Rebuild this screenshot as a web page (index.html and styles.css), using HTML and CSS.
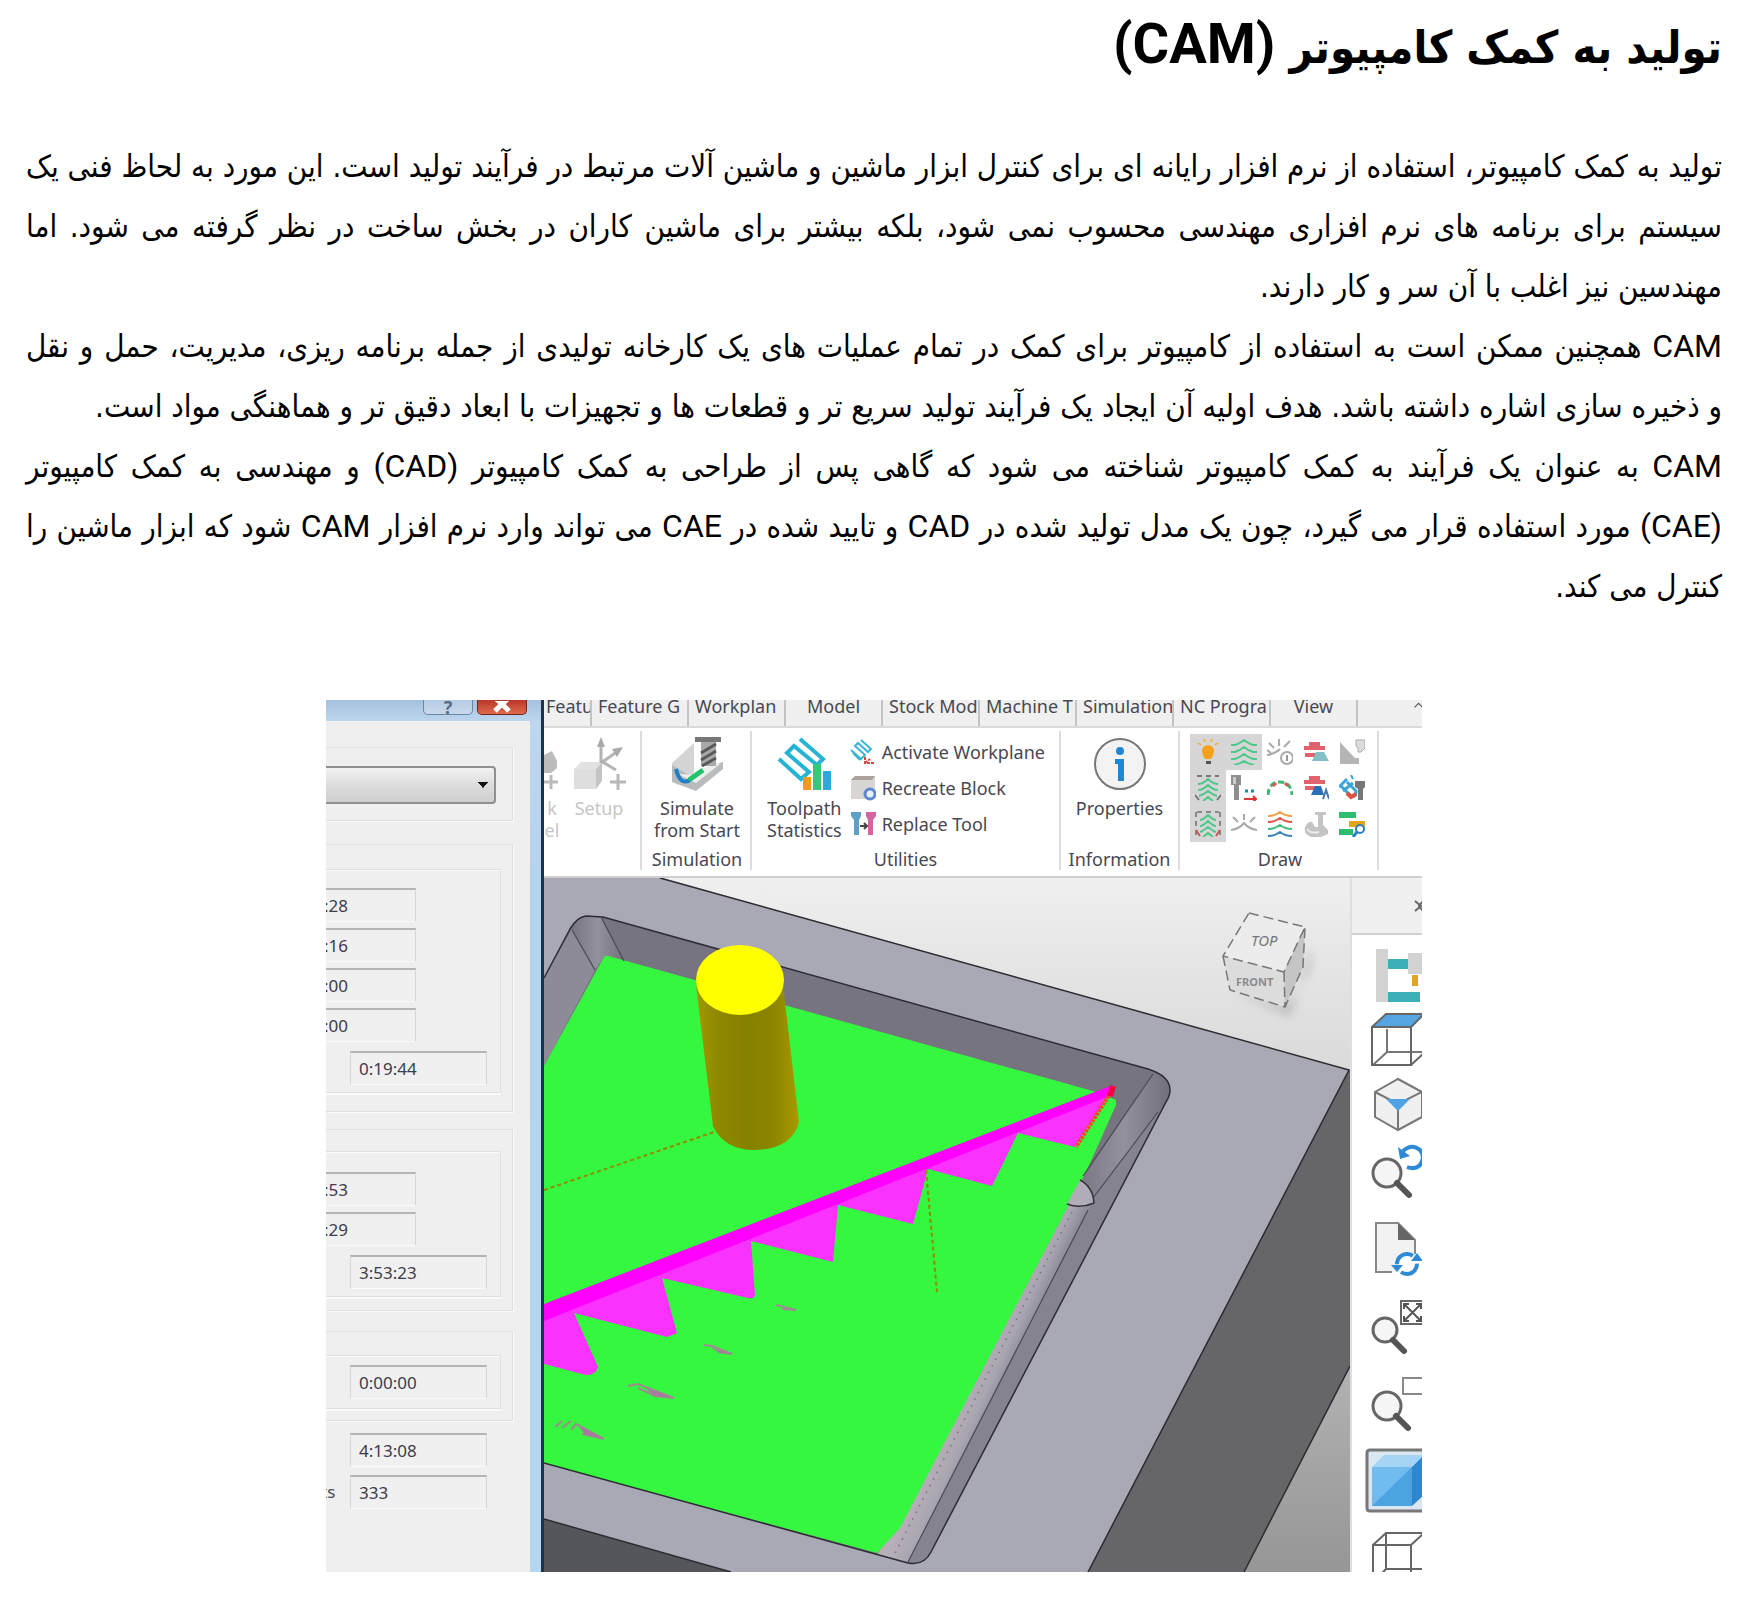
FILE: index.html
```html
<!DOCTYPE html>
<html lang="fa" dir="rtl">
<head>
<meta charset="utf-8">
<meta name="viewport" content="width=device-width, initial-scale=1">
<title>تولید به کمک کامپیوتر (CAM)</title>
<link rel="stylesheet" href="styles.css">
</head>
<body>
<article class="article">
<h1 class="title">تولید به کمک کامپیوتر <bdi class="latin">(CAM)</bdi></h1>
<p class="text">تولید به کمک کامپیوتر، استفاده از نرم افزار رایانه ای برای کنترل ابزار ماشین و ماشین آلات مرتبط در فرآیند تولید است. این مورد به لحاظ فنی یک سیستم برای برنامه های نرم افزاری مهندسی محسوب نمی شود، بلکه بیشتر برای ماشین کاران در بخش ساخت در نظر گرفته می شود. اما مهندسین نیز اغلب با آن سر و کار دارند.</p>
<p class="text"><span class="latin">CAM</span> همچنین ممکن است به استفاده از کامپیوتر برای کمک در تمام عملیات های یک کارخانه تولیدی از جمله برنامه ریزی، مدیریت، حمل و نقل و&nbsp;ذخیره سازی اشاره داشته باشد. هدف اولیه آن ایجاد یک فرآیند تولید سریع تر و قطعات ها و تجهیزات با ابعاد دقیق تر و هماهنگی مواد است.</p>
<p class="text"><span class="latin">CAM</span> به عنوان یک فرآیند به کمک کامپیوتر شناخته می شود که گاهی پس از طراحی به کمک کامپیوتر <bdi class="latin">(CAD)</bdi> و مهندسی به کمک کامپیوتر <span class="keep"><bdi class="latin">(CAE)</bdi> مورد استفاده</span> قرار می گیرد، چون یک مدل تولید شده در <span class="latin">CAD</span> و تایید شده در <span class="latin">CAE</span> می تواند وارد نرم افزار <span class="latin">CAM</span> شود که ابزار ماشین را <span class="keep">کنترل می کند.</span></p>

<figure class="app" dir="ltr" lang="en">
  <section class="dialog">
    <header class="dialog-bar">
      <button class="win-btn" type="button" aria-label="Help">?</button>
      <button class="win-btn win-close" type="button" aria-label="Close"><svg viewBox="0 0 20 12"><path d="M2-4L10 3L18-4M3 10L10 3L17 10" fill="none" stroke="#fff" stroke-width="5"/></svg></button>
    </header>
    <div class="dialog-body">
      <div class="group group-select"><select class="combo" aria-label="Toolpath"><option></option></select></div>
      <div class="group group-a"><div class="inner">
        <input class="field cut" value=":28" aria-label="Cutting time">
        <input class="field cut" value=":16" aria-label="Lead time">
        <input class="field cut" value=":00" aria-label="Link time">
        <input class="field cut" value=":00" aria-label="Plunge time">
        <input class="field total" value="0:19:44" aria-label="Feed total">
      </div></div>
      <div class="group group-b"><div class="inner">
        <input class="field cut" value=":53" aria-label="Rapid time">
        <input class="field cut" value=":29" aria-label="Skim time">
        <input class="field total" value="3:53:23" aria-label="Rapid total">
      </div></div>
      <div class="group group-c"><div class="inner">
        <input class="field total" value="0:00:00" aria-label="Other time">
      </div></div>
      <div class="sums">
        <input class="field total" value="4:13:08" aria-label="Total time">
        <div class="sum-row"><label class="sum-label" for="lifts">ts</label><input class="field total" id="lifts" value="333"></div>
      </div>
    </div>
  </section>

  <div class="main">
    <nav class="tabs">
      <a class="tab first" href="#">Featu</a><a class="tab" href="#">Feature G</a><a class="tab" href="#">Workplan</a><a class="tab mid" href="#">Model</a><a class="tab" href="#">Stock Mod</a><a class="tab" href="#">Machine T</a><a class="tab" href="#">Simulation</a><a class="tab" href="#">NC Progra</a><a class="tab mid last" href="#">View</a><span class="tab-end"><svg viewBox="0 0 14 10"><path d="M1 9L8 2L15 9" fill="none" stroke="#555" stroke-width="2"/></svg></span>
    </nav>
    <div class="ribbon">
      <section class="rgroup r-setup">
        <button class="big off half" type="button"><svg viewBox="0 0 16 54"><path d="M0 18L8 14L13 24V31L7 36H0z" fill="#bbb"/><path d="M7 38V52M0 45H14" stroke="#bbb" stroke-width="3"/></svg><span>k<br>el</span></button>
        <button class="big off" type="button"><svg viewBox="0 0 54 54"><path d="M2 32L9 25H30L24 32z" fill="#e2e2e2"/><path d="M2 32H24V52H2z" fill="#dedede"/><path d="M24 32L30 25V44L24 52z" fill="#c4c4c4"/><path d="M29 26V4M29 26L46 14M29 24L44 33" stroke="#b4b4b4" stroke-width="3" fill="none"/><path d="M25 10L29 0L33 10zM40 12L51 10L45 20z" fill="#aaa"/><path d="M46 37V53M38 45H54" stroke="#b8b8b8" stroke-width="3"/></svg><span>Setup</span></button>
      </section>
      <section class="rgroup r-sim">
        <button class="big" type="button"><svg viewBox="0 0 54 54"><path d="M2 26L24 6V36L8 48L2 44z" fill="#d4d4d4"/><path d="M2 28V45L26 54L53 32V25L46 27L26 42z" fill="#b9bcbe"/><path d="M8 37L26 46L50 27L44 24L25 38z" fill="#eee"/><path d="M6 32Q10 49 20 43" stroke="#1f7fc4" stroke-width="4" fill="none"/><path d="M19 43L33 33" stroke="#22c46a" stroke-width="5"/><path d="M25 0H51V5H25z" fill="#777"/><path d="M31 5H46V29H31z" fill="#a9a9a9"/><path d="M31 16L46 7M31 23L46 14M32 29L46 21" stroke="#595959" stroke-width="3"/></svg><span>Simulate<br>from Start</span></button>
        <h2 class="rname">Simulation</h2>
      </section>
      <section class="rgroup r-util">
        <div class="rrow">
          <button class="big" type="button"><svg viewBox="0 0 54 54"><path d="M2 22L24 42L32 35L10 16L17 9L40 28L46 22L23 2" fill="none" stroke="#25b4d4" stroke-width="4"/><path d="M26 40H34V53H26z" fill="#f49a1c"/><path d="M36 27H44V53H36z" fill="#35c878"/><path d="M46 34H54V53H46z" fill="#2ba8dc"/></svg><span>Toolpath<br>Statistics</span></button>
          <div class="small-list">
            <button class="small" type="button"><svg viewBox="0 0 26 26"><path d="M1 11L11 20L15 16L5 7L8 4L18 13L21 10L11 1M3 14L10 21" fill="none" stroke="#3bb7d6" stroke-width="2"/><path d="M15 18V24H24M15 24L20 20" stroke="#d44" stroke-width="2" stroke-dasharray="3 1" fill="none"/></svg>Activate Workplane</button>
            <button class="small" type="button"><svg viewBox="0 0 26 26"><path d="M1 5L5 1H25V20L22 24H1z" fill="#d9d5d2"/><path d="M1 5L5 1H25L22 5z" fill="#aaa39d"/><circle cx="20" cy="19" r="5" fill="#e8eefc" stroke="#5c86d0" stroke-width="3"/></svg>Recreate Block</button>
            <button class="small" type="button"><svg viewBox="0 0 26 26"><path d="M1 1H11V5L9 9V24H4V9L1 5z" fill="#5da0c8"/><path d="M16 1H26V5L23 9V24H18V9L16 5z" fill="#d6659f"/><path d="M10 15H17M14 12L17 15L14 18" fill="none" stroke="#444" stroke-width="2"/></svg>Replace Tool</button>
          </div>
        </div>
        <h2 class="rname">Utilities</h2>
      </section>
      <section class="rgroup r-info">
        <button class="big" type="button"><svg viewBox="0 0 54 54"><circle cx="27" cy="27" r="25" fill="#f3f3f3" stroke="#777" stroke-width="2"/><circle cx="27" cy="14" r="4" fill="#1f86d2"/><path d="M22 22H31V44H25V27H22z" fill="#1f86d2"/></svg><span>Properties</span></button>
        <h2 class="rname">Information</h2>
      </section>
      <section class="rgroup r-draw">
        <div class="icons">
          <button class="ico on" type="button" aria-label="Lights"><svg viewBox="0 0 26 26"><path d="M7 12a6 6 0 0 1 12 0q0 3-3 8h-6q-3-5-3-8z" fill="#f6a11a"/><path d="M11 22H16V25H11z" fill="#555"/><path d="M3 4L6 6M23 4L20 6M9 0L10 3M17 0L16 3" stroke="#e8b44a" stroke-width="2"/></svg></button>
          <button class="ico on" type="button" aria-label="Toolpath"><svg viewBox="0 0 26 26"><path d="M0 6H4Q8 5 13 1Q18 5 22 6H26M0 13H4Q8 12 13 8Q18 12 22 13H26M0 20H4Q8 19 13 15Q18 19 22 20H26M3 26Q8 25 13 22Q18 25 23 26" fill="none" stroke="#4ec98a" stroke-width="2"/></svg></button>
          <button class="ico" type="button" aria-label="Tool axis"><svg viewBox="0 0 26 26"><path d="M0 16Q8 15 13 10M2 4L7 9M12 0V7M23 2L17 8M4 14L0 11" fill="none" stroke="#aaa" stroke-width="2"/><circle cx="20" cy="19" r="6" fill="#fff" stroke="#aaa" stroke-width="2"/><path d="M20 16V22" stroke="#999" stroke-width="2"/></svg></button>
          <button class="ico" type="button" aria-label="Contact normals"><svg viewBox="0 0 26 26"><path d="M6 3H17V7H22V11H1V7H6z" fill="#e0626c"/><path d="M2 14H14V18H2z" fill="#e0626c"/><path d="M13 13H21L26 22H9z" fill="#82bfc6"/></svg></button>
          <button class="ico" type="button" aria-label="Stock"><svg viewBox="0 0 26 26"><path d="M1 3L12 15L16 19H20V25H1z" fill="#b5b5b5"/><path d="M17 1H26V9L22 13H19V9L17 7z" fill="#ddd" stroke="#aaa"/></svg></button>
          <button class="ico on" type="button" aria-label="Leads"><svg viewBox="0 0 26 26"><path d="M2 1H24" stroke="#777" stroke-width="2" stroke-dasharray="5 4"/><path d="M3 9Q8 9 13 4Q18 9 23 9M3 15Q8 15 13 10Q18 15 23 15M4 21Q8 20 13 16Q18 20 22 21M8 26L13 22L18 26" fill="none" stroke="#4ec98a" stroke-width="2"/><path d="M0 20L4 25M26 20L22 25" stroke="#777" stroke-width="2"/></svg></button>
          <button class="ico" type="button" aria-label="Tool points"><svg viewBox="0 0 26 26"><path d="M0 0H10V10H8V25H3V10H0z" fill="#8e8e8e"/><path d="M2 2H5V9H2z" fill="#ccc"/><path d="M14 16H17M20 16H23" stroke="#28a" stroke-width="3"/><path d="M13 24H25M22 21L25 24L22 27" stroke="#d33" stroke-width="2" fill="none"/></svg></button>
          <button class="ico" type="button" aria-label="Feed"><svg viewBox="0 0 26 26"><path d="M1 20Q2 7 13 7Q24 7 25 20" fill="none" stroke="#3db573" stroke-width="3" stroke-dasharray="6 3"/><path d="M6 11L9 8M18 8L21 11" stroke="#d55" stroke-width="3"/></svg></button>
          <button class="ico" type="button" aria-label="Points"><svg viewBox="0 0 26 26"><path d="M6 1H17V5H22V9H1V5H6z" fill="#e0626c"/><path d="M2 11H14V15H2z" fill="#e0626c"/><path d="M12 11H18L21 20H8z" fill="#2a6fb5"/><path d="M20 24L23 15L26 24" fill="none" stroke="#47a" stroke-width="2"/></svg></button>
          <button class="ico" type="button" aria-label="Snap"><svg viewBox="0 0 26 26"><path d="M14 8L4 16M8 4L0 12" stroke="#3aa5d8" stroke-width="3"/><path d="M1 10L11 20Q17 24 17 16L8 7" fill="none" stroke="#3aa5d8" stroke-width="3"/><path d="M8 18L12 22L17 19" fill="none" stroke="#e0523e" stroke-width="4"/><path d="M16 6H26V12L24 14V25H19V14L16 12z" fill="#777"/><path d="M12 0L14 4" stroke="#3aa5d8" stroke-width="2"/></svg></button>
          <button class="ico on" type="button" aria-label="Links"><svg viewBox="0 0 26 26"><path d="M2 1H24M1 1V24M25 1V24" stroke="#888" stroke-width="2" stroke-dasharray="5 4"/><path d="M5 9Q8 9 13 4Q18 9 21 9M5 15Q8 15 13 10Q18 15 21 15M5 21Q8 20 13 16Q18 20 21 21M8 26L13 22L18 26" fill="none" stroke="#4ec98a" stroke-width="2"/><path d="M1 19L5 25M25 19L21 25" stroke="#c55" stroke-width="2"/></svg></button>
          <button class="ico" type="button" aria-label="Normals"><svg viewBox="0 0 26 26"><path d="M0 19Q8 18 13 12Q18 18 26 19M2 6L7 11M13 3V9M24 6L19 11" fill="none" stroke="#aaa" stroke-width="2"/></svg></button>
          <button class="ico" type="button" aria-label="Levels"><svg viewBox="0 0 26 26"><g fill="none" stroke-width="2"><path d="M1 5Q8 5 13 1Q18 5 25 5" stroke="#f0a04a"/><path d="M1 11Q8 11 13 7Q18 11 25 11" stroke="#e05a4a"/><path d="M1 18Q8 18 13 14Q18 18 25 18" stroke="#3fbf7c"/><path d="M1 25Q8 25 13 21Q18 25 25 25" stroke="#3a85b8"/></g></svg></button>
          <button class="ico" type="button" aria-label="Collisions"><svg viewBox="0 0 26 26"><path d="M12 1H23V4H20V14L25 19V23L18 26H8Q0 23 2 16Q5 10 9 11L12 16H15V4H12z" fill="#c4c4c4"/><path d="M4 18Q8 23 16 21" stroke="#eee" stroke-width="2" fill="none"/></svg></button>
          <button class="ico" type="button" aria-label="Order"><svg viewBox="0 0 26 26"><path d="M0 1H17V7H0zM0 18H14V24H0z" fill="#2fbd72"/><path d="M10 10H26V16H10z" fill="#e3a51e"/><circle cx="21" cy="18" r="4" fill="#fff" stroke="#2a7fc0" stroke-width="2"/><path d="M18 21L14 26" stroke="#2a7fc0" stroke-width="3"/></svg></button>
        </div>
        <h2 class="rname">Draw</h2>
      </section>
    </div>
    <div class="work">
      <svg class="view" viewBox="544 878 806 694" preserveAspectRatio="xMidYMid slice" role="img" aria-label="Machined pocket">
        <defs>
          <linearGradient id="bg" x1="0" y1="0" x2="0" y2="1"><stop offset="0" stop-color="#efefef"/><stop offset=".3" stop-color="#d8d8d8"/><stop offset="1" stop-color="#969696"/></linearGradient>
          <linearGradient id="cyl"><stop offset="0" stop-color="#a39a00"/><stop offset=".2" stop-color="#8f8900"/><stop offset=".5" stop-color="#858000"/><stop offset=".75" stop-color="#8b8500"/><stop offset="1" stop-color="#a89a00"/></linearGradient>
          <linearGradient id="corner"><stop offset="0" stop-color="#777681"/><stop offset=".5" stop-color="#92919c"/><stop offset="1" stop-color="#72717b"/></linearGradient>
          <linearGradient id="rail" gradientUnits="userSpaceOnUse" x1="970" y1="1380" x2="1000" y2="1394"><stop offset="0" stop-color="#b7afb9"/><stop offset=".6" stop-color="#a9a5b0"/><stop offset="1" stop-color="#8d8c97"/></linearGradient>
          <filter id="soft"><feGaussianBlur stdDeviation="5"/></filter>
        </defs>
        <path d="M544 878H1350V1572H544z" fill="url(#bg)"/>
        <path d="M544 878H663L1349 1070L1088 1572H544z" fill="#a9a9b5"/>
        <path d="M1349 1070H1350V1366L1244 1572H1088z" fill="#65656a"/>
        <path d="M544 1519L731 1572H544z" fill="#55565c"/>
        <path d="M660 878L1349 1070L1088 1572M1350 1366L1244 1572M544 1519L731 1572" fill="none" stroke="#2c2c30" stroke-width="1.5"/>
        <path d="M544 978L570 929Q577 917 586 916L603 917L1148 1069Q1170 1076 1170 1090Q1170 1096 1166 1102L931 1552Q924 1566 908 1563L544 1463z" fill="#75747f"/>
        <path d="M544 978L572 929L595 970L544 1066z" fill="#8c8b97"/>
        <path d="M572 929Q577 917 586 916L601 917L624 961L604 957L595 970z" fill="url(#corner)"/>
        <path d="M1153 1074Q1170 1080 1169 1092L1166 1102L1093 1198L1078 1186z" fill="url(#corner)"/>
        <path d="M1166 1102L931 1552Q924 1566 908 1562L1093 1198z" fill="#84838f"/>
        <path d="M1066 1200L1090 1206L908 1563L877 1555z" fill="url(#rail)"/>
        <path d="M604 957Q606 955 612 957L1100 1093L1116 1100V1105L1087 1170L900 1528L877 1553L544 1463V1066z" fill="#35f73f"/>
        <path d="M544 978L570 929Q577 917 586 916L603 917L1148 1069Q1170 1076 1170 1090Q1170 1096 1166 1102L931 1552Q924 1566 908 1563L544 1463" fill="none" stroke="#2c2c34" stroke-width="1.5"/>
        <path d="M572 930L595 970M601 917L624 961M1153 1074L1083 1176M1158 1112L1093 1198M1088 1210L908 1562" fill="none" stroke="#4a4953" stroke-width="1.2"/>
        <path d="M1080 1180Q1093 1187 1094 1203Q1080 1209 1067 1204z" fill="#b1adb8"/>
        <path d="M1080 1180Q1093 1187 1094 1203Q1080 1209 1067 1204" fill="none" stroke="#34333b" stroke-width="1.5"/>
        <path d="M1072 1212L893 1557" stroke="#77727c" stroke-width="1.5" stroke-dasharray="1.5 6"/>
        <path d="M544 1312L1113 1089L1075 1147L1018 1133L992 1186L928 1169L913 1224L838 1205L833 1262L751 1241L755 1295Q754 1299 748 1298L662 1278L677 1333L667 1337L574 1313L598 1367Q596 1375 586 1375L544 1364z" fill="#fa32ff"/>
        <path d="M544 1304L1113 1085L1114 1094L544 1321z" fill="#ff00ff"/>
        <path d="M1113 1089L1076 1147" stroke="#f04a22" stroke-width="4" stroke-dasharray="3 1"/>
        <path d="M1113 1086L1110 1096" stroke="#f00040" stroke-width="6"/>
        <path d="M544 1190L714 1132M926 1170L937 1292" fill="none" stroke="#8f8c00" stroke-width="2" stroke-dasharray="4 3"/>
        <path d="M696 985L713 1126Q724 1150 755 1150Q792 1149 799 1122L783 985z" fill="url(#cyl)"/>
        <ellipse cx="740" cy="980" rx="44" ry="35" fill="#ffff00"/>
        <path d="M555 1427L562 1421M562 1428L571 1421M571 1430L576 1424L604 1439L582 1434M580 1428L592 1436M628 1386L638 1384L674 1398L655 1396L638 1388M704 1345L712 1346L732 1354L718 1352M776 1305L796 1310L782 1309" fill="none" stroke="#a08a90" stroke-width="2"/>
        <path d="M580 1426L604 1439L584 1434zM645 1388L672 1397L655 1396zM710 1347L730 1354L718 1352z" fill="#a878a0"/>
        <path d="M1232 992L1286 1008L1310 970L1312 945L1290 1016z" fill="#888" opacity=".5" filter="url(#soft)"/>
        <path d="M1249 913L1305 927L1303 967L1285 1007L1230 990L1223 956z" fill="#dcdcdc"/>
        <path d="M1249 913L1305 927L1284 972L1223 956z" fill="#ececec"/>
        <path d="M1305 927L1303 967L1285 1007L1284 972z" fill="#c5c5c5"/>
        <path d="M1249 913L1305 927L1284 972L1223 956zM1223 956L1230 990L1285 1007L1303 967L1305 927M1284 972L1285 1007" fill="none" stroke="#777" stroke-width="1.5" stroke-dasharray="10 5"/>
        <text class="cube-top" x="1251" y="946">TOP</text>
        <text class="cube-side" x="1236" y="986">FRONT</text>
      </svg>
      <aside class="side">
        <header class="side-head"><button class="side-close" type="button" aria-label="Close toolbar"><svg viewBox="0 0 8 14"><path d="M1 2L7 7L1 12M9 2L5 7L9 12" fill="none" stroke="#666" stroke-width="2"/></svg></button></header>
        <button class="tool" type="button" aria-label="Machine"><svg viewBox="0 0 72 66"><path d="M26 8H38V61H26z" fill="#d2d2d2"/><path d="M38 18H60V28H38zM38 51H70V61H38z" fill="#3bb0b8"/><path d="M58 12H72V33H58z" fill="#d2d2d2"/><path d="M62 34H68V45H62z" fill="#e5a323"/></svg></button>
        <button class="tool" type="button" aria-label="View from top"><svg viewBox="0 0 72 66"><path d="M22 20L36 7H74L62 20z" fill="#56a5e3"/><path d="M37 22V45L23 58M37 45H74" fill="none" stroke="#777" stroke-width="2"/><path d="M22 20H61V58H22zM22 20L36 7H74M61 20L74 7M61 58L74 46" fill="none" stroke="#666" stroke-width="2"/></svg></button>
        <button class="tool" type="button" aria-label="Isometric view"><svg viewBox="0 0 72 66"><path d="M48 6L72 19V44L48 57L25 44V19z" fill="#f0f0f0" stroke="#777" stroke-width="2"/><path d="M25 19L48 31L72 19M48 31V57" fill="none" stroke="#777" stroke-width="2"/><path d="M36 26H60L48 38z" fill="#4fa3e5"/></svg></button>
        <button class="tool" type="button" aria-label="Previous view"><svg viewBox="0 0 72 66"><circle cx="37" cy="34" r="14" fill="#f5f5f5" stroke="#666" stroke-width="3"/><path d="M47 44L59 56" stroke="#555" stroke-width="6" stroke-linecap="round"/><path d="M53 12Q62 4 70 11Q76 18 70 26Q65 31 57 28" fill="none" stroke="#2f8ad6" stroke-width="4"/><path d="M48 8L60 17L50 20z" fill="#2f8ad6"/></svg></button>
        <button class="tool tall" type="button" aria-label="Refresh"><svg viewBox="0 0 72 77"><path d="M26 11H48L65 28V60H26z" fill="#f2f2f2"/><path d="M42 60H26V11H48L65 28V42" fill="none" stroke="#888" stroke-width="2"/><path d="M48 11V28H65z" fill="#666"/><circle cx="57" cy="52" r="10" fill="#fff" stroke="#2f8ad6" stroke-width="4" stroke-dasharray="22 9"/><path d="M41 53H53L47 60zM61 49H73L67 41z" fill="#2f8ad6"/></svg></button>
        <button class="tool tall" type="button" aria-label="Zoom to fit"><svg viewBox="0 0 72 77"><circle cx="35" cy="41" r="12" fill="#f5f5f5" stroke="#666" stroke-width="3"/><path d="M43 51L54 62" stroke="#555" stroke-width="6" stroke-linecap="round"/><path d="M51 12H74V35H51z" fill="#fff" stroke="#666" stroke-width="2"/><path d="M54 15L71 32M71 15L54 32M54 20V15H59M54 27V32H59M66 15H71V20M66 32H71V27" stroke="#555" stroke-width="2" fill="none"/></svg></button>
        <button class="tool tall" type="button" aria-label="Zoom window"><svg viewBox="0 0 72 77"><circle cx="37" cy="40" r="14" fill="#f5f5f5" stroke="#666" stroke-width="3"/><path d="M46 50L58 62" stroke="#555" stroke-width="6" stroke-linecap="round"/><path d="M53 12H76V28H53z" fill="#fff" stroke="#888" stroke-width="2"/></svg></button>
        <button class="tool tall" type="button" aria-label="Shaded"><svg viewBox="0 0 72 77"><path d="M20 7H76V68H20Q17 68 17 65V10Q17 7 20 7z" fill="#dbe7f0" stroke="#777" stroke-width="3"/><path d="M22 24L34 12H74L62 24z" fill="#a5d4f5"/><path d="M22 24H62V63H22z" fill="#4ba3e2"/><path d="M22 24H62L22 63z" fill="#72bbef"/><path d="M62 24L74 12V52L62 63z" fill="#2f86cb"/></svg></button>
        <button class="tool tall" type="button" aria-label="Wireframe"><svg viewBox="0 0 72 77"><path d="M23 25H61V70H23zM23 25L36 13H74M61 25L74 13M36 13V49H74M23 63L36 49" fill="none" stroke="#666" stroke-width="2"/></svg></button>
      </aside>
    </div>
  </div>
</figure>
</article>
</body>
</html>
```
FILE: styles.css
```css
* { box-sizing: border-box; }
body { margin: 0; background: #fff; color: #000; }
.article {
  padding: 12px 25px 34px 26px;
  font-family: "DejaVu Sans Condensed", "DejaVu Sans", sans-serif;
}
.latin { font-family: Roboto, sans-serif; }
.keep { white-space: nowrap; }
.title { margin: 0 0 52px; font-size: 45px; line-height: 72px; font-weight: 700; }
.title .latin { font-size: 56px; line-height: 1; }
.text { margin: 0; font-size: 31px; line-height: 60px; text-align: justify; }
.text .latin { font-size: 32px; line-height: 1; }

.app {
  display: flex;
  max-width: 1096px;
  height: 872px;
  margin: 84px auto 0;
  overflow: hidden;
  font-family: "Noto Sans", "Open Sans", sans-serif;
  font-size: 18px;
  line-height: 22px;
  color: #484850;
}
.app svg { display: block; }
.app button { font: inherit; color: inherit; background: none; border: 0; padding: 0; }

/* statistics dialog */
.dialog {
  flex: 0 0 218px;
  border-right: 3px solid #1d3347;
  background: linear-gradient(#a6c1de, #bed6ee 22px, #b3d3ee 200px, #b5d6f0);
  padding-right: 11px;
  overflow: hidden;
}
.dialog-bar { display: flex; justify-content: flex-end; gap: 4px; height: 21px; padding-right: 3px; }
.app .win-btn {
  width: 50px;
  height: 15px;
  border: 1px solid #6d87a5;
  border-top: 0;
  border-radius: 0 0 5px 5px;
  background: linear-gradient(#b5cbe4, #c8d9ec);
  line-height: 8px;
  color: #5b6c80;
  font-weight: 700;
}
.app .win-close { background: linear-gradient(#b9372b, #e0684c); border-color: #70251f; }
.win-close svg { width: 20px; height: 12px; margin: 0 auto; }
.dialog-body { height: 851px; padding-top: 26px; background: #efeff0; }
.group {
  width: 187px;
  border: 1px solid #dfdfe2;
  border-left: 0;
  box-shadow: 1px 1px #fafafa;
}
.group-select { height: 74px; padding-top: 18px; }
.combo {
  display: block;
  width: 170px;
  height: 38px;
  appearance: none;
  border: 2px solid #909090;
  border-left: 0;
  border-radius: 0 4px 4px 0;
  background:
    linear-gradient(to bottom left, #111 50%, transparent 52%) 152px 14px / 5px 6px no-repeat,
    linear-gradient(to bottom right, #111 50%, transparent 52%) 157px 14px / 5px 6px no-repeat,
    linear-gradient(#f2f2f2, #dcdcdc 50%, #cfcfcf);
}
.inner {
  width: 175px;
  border: 1px solid #e0e0e3;
  border-left: 0;
  box-shadow: inset 0 1px #fafafa, 0 2px #fafafa;
  display: flex;
  flex-direction: column;
  gap: 6px;
}
.group-a { margin-top: 23px; height: 268px; padding-top: 24px; }
.group-a .inner { height: 224px; padding-top: 18px; }
.group-b { margin-top: 17px; height: 182px; padding-top: 21px; }
.group-b .inner { height: 146px; padding-top: 20px; }
.group-c { margin-top: 20px; height: 90px; padding-top: 23px; }
.group-c .inner { height: 54px; padding-top: 6px; }
.sums { margin-top: 12px; display: flex; flex-direction: column; gap: 8px; }
.sum-row { display: flex; }
.sum-label { width: 24px; line-height: 33px; margin-right: -24px; text-indent: -5px; font-size: 17px; }
.field {
  flex: none;
  height: 34px;
  border: 1px solid #d6d6d9;
  border-top: 2px solid #b4b4b8;
  border-bottom-color: #fbfbfb;
  background: #f0f0f1;
  color: #3c3c4a;
  font: 17px/20px "Noto Sans", "Open Sans", sans-serif;
}
.cut { width: 90px; padding: 0; border-left: 0; text-indent: -2px; }
.total { width: 137px; margin-left: 24px; padding: 0 8px; }
.inner .total { margin-top: 3px; }

/* ribbon */
.main { flex: 1; min-width: 0; display: flex; flex-direction: column; }
.tabs { display: flex; height: 28px; background: #f0f0f0; border-bottom: 2px solid #dadada; overflow: hidden; }
.tab {
  flex: 0 0 97px;
  padding-left: 6px;
  border-right: 2px solid #c4c4c6;
  overflow: hidden;
  white-space: nowrap;
  line-height: 12px;
  color: inherit;
  text-decoration: none;
}
.tab.first { flex-basis: 48px; padding-left: 2px; }
.tab.mid { padding-left: 0; text-align: center; }
.tab.last { flex-basis: 87px; }
.tab-end { flex: 1; display: flex; justify-content: flex-end; }
.tab-end svg { width: 8px; height: 10px; }
.ribbon { display: flex; height: 148px; padding: 3px 0 6px; background: #fff; }
.rgroup {
  flex: none;
  display: flex;
  flex-direction: column;
  justify-content: space-between;
  align-items: center;
  border-right: 2px solid #dcdcdc;
}
.r-setup { width: 98px; flex-direction: row; justify-content: flex-start; align-items: flex-start; gap: 12px; }
.r-sim { width: 110px; padding-left: 2px; }
.r-util { width: 309px; }
.r-info { width: 119px; }
.r-draw { width: 199px; padding-left: 3px; }
.rname { margin: 0; font-size: 18px; line-height: 22px; font-weight: 400; }
.big { display: flex; flex-direction: column; align-items: center; gap: 6px; white-space: nowrap; }
.app .big { padding-top: 6px; }
.app .off { color: #c6c6c6; }
.big svg { width: 54px; height: 54px; }
.half { width: 16px; }
.half svg { width: 16px; }
.rrow { display: flex; align-self: stretch; gap: 8px; padding-left: 15px; }
.small-list { display: flex; flex-direction: column; padding-top: 3px; }
.small { display: flex; align-items: center; gap: 6px; height: 36px; white-space: nowrap; }
.small svg { width: 26px; height: 26px; }
.icons { display: grid; grid-template-columns: repeat(5, 36px); padding-top: 3px; }
.ico { display: grid; place-items: center; height: 36px; }
.ico svg { width: 26px; height: 26px; }
.app .on { background: #d6d6d6; }

/* 3D view and side toolbar */
.work { flex: 1; min-height: 0; display: flex; border-top: 2px solid #cfcfd2; }
.view { flex: 1; min-width: 0; width: 100%; height: 694px; }
.cube-top { font: italic 15px "Noto Sans", sans-serif; fill: #777; }
.cube-side { font: 700 11px "Noto Sans", sans-serif; fill: #8c8c8c; }
.side { flex: 0 0 72px; background: #fff; border-left: 2px solid #dedede; overflow: hidden; }
.side-head { display: flex; justify-content: flex-end; height: 57px; background: #f0f0f0; border-bottom: 2px solid #d2d2d2; }
.side-close svg { width: 8px; height: 14px; }
.tool { display: block; width: 72px; margin-left: -2px; }
.tool svg { width: 72px; height: 66px; }
.app .side-head + .tool { padding-top: 6px; }
.app .tall svg { height: 77px; }
.tool:not(.tall) + .tall { margin-top: 7px; }
```
